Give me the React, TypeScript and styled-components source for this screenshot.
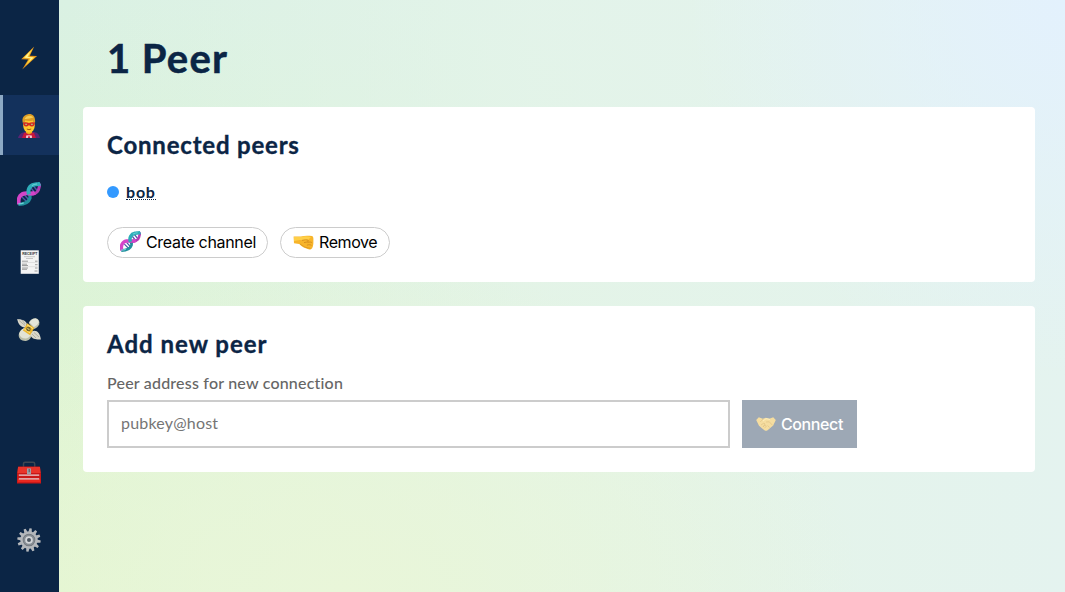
import React from 'react';
import styled, { createGlobalStyle } from 'styled-components';

const GlobalStyle = createGlobalStyle`
  * { box-sizing: border-box; }
  body { margin: 0; font-family: Lato, 'Liberation Sans', sans-serif; color: #0b2545; }
`;

const Page = styled.div`
  display: flex;
  height: 592px;
  overflow: hidden;
  background:
    radial-gradient(circle at 100% 0, #e3f1fd 0, rgba(227, 241, 253, 0) 380px),
    radial-gradient(ellipse 520px 330px at 32% 100%, #e9f6d9 0, rgba(233, 246, 217, 0) 100%),
    linear-gradient(90deg, rgba(229, 244, 235, 0) 6%, rgba(229, 244, 235, 0.8) 50%, #e4f3ef 100%),
    linear-gradient(180deg, #daf1e3 0, #dbf3d9 35%, #e2f6ce 100%);
`;

const Sidebar = styled.nav`
  display: flex;
  flex-direction: column;
  justify-content: space-between;
  width: 59px;
  flex: none;
  padding: 27px 0 23px;
  background: #0b2545;
`;

const NavGroup = styled.div`
  display: flex;
  flex-direction: column;
  gap: 8px;
`;

const NavItem = styled.a<{ $active?: boolean }>`
  display: flex;
  height: 60px;
  padding: 19px 0 0 14px;
  border-left: 3px solid ${p => (p.$active ? '#8da9c4' : 'transparent')};
  background: ${p => (p.$active ? '#13315c' : 'transparent')};
`;

const Icon = styled.svg<{ $size: number }>`
  display: block;
  flex: none;
  width: ${p => p.$size}px;
  height: ${p => p.$size}px;
`;

const Main = styled.main`
  display: flex;
  flex-direction: column;
  flex: 1;
  padding: 34px 30px 0 24px;
`;

const Title = styled.h1`
  margin: 0 0 25px 24px;
  font-size: 40px;
  line-height: 48px;
  font-weight: 700;
  letter-spacing: 1.2px;
  word-spacing: -0.5px;
  -webkit-text-stroke: 0.5px #0b2545;
`;

const Card = styled.section<{ $height: number }>`
  height: ${p => p.$height}px;
  margin-bottom: 24px;
  padding: 22px 24px 0;
  background: #fff;
  border-radius: 4px;
`;

const Heading = styled.h2<{ $spacing: number }>`
  margin: 0;
  font-size: 24px;
  line-height: 31px;
  padding-bottom: 1px;
  font-weight: 700;
  letter-spacing: ${p => p.$spacing}px;
  -webkit-text-stroke: 0.35px #0b2545;
`;

const Peer = styled.div`
  display: flex;
  align-items: center;
  gap: 7px;
  height: 20px;
  margin-top: 21px;
`;

const Status = styled.span`
  width: 12px;
  height: 12px;
  margin-bottom: 1px;
  border-radius: 50%;
  background: #3399ff;
`;

const Alias = styled.abbr`
  height: 18px;
  margin-bottom: 2px;
  font-size: 16px;
  line-height: 19px;
  font-weight: 700;
  letter-spacing: 0.8px;
  text-decoration: none;
  border-bottom: 1px dotted #0b2545;
`;

const Actions = styled.div`
  display: flex;
  gap: 12px;
  margin-top: 25px;
`;

const PillButton = styled.button<{ $width: number; $spacing: number }>`
  display: flex;
  align-items: center;
  gap: 5px;
  width: ${p => p.$width}px;
  height: 31px;
  padding: 0 0 2px 12px;
  border: 1px solid #ccc;
  border-radius: 16px;
  background: #fff;
  color: #000;
  font: 400 16px Inter, sans-serif;
  letter-spacing: ${p => p.$spacing}px;
  white-space: nowrap;
`;

const Label = styled.label`
  display: block;
  margin-top: 13px;
  font-size: 16px;
  line-height: 20px;
  font-weight: 500;
  letter-spacing: 0.2px;
  color: #666;
`;

const Form = styled.form`
  display: flex;
  gap: 12px;
  margin-top: 7px;
`;

const AddressInput = styled.input`
  width: 623px;
  height: 48px;
  padding: 0 12px 3px;
  border: 2px solid #ccc;
  background: #fff;
  font: 400 16px Lato, sans-serif;
  letter-spacing: 0.2px;
  &::placeholder { color: #757575; }
`;

const ConnectButton = styled.button`
  display: flex;
  align-items: center;
  gap: 5px;
  width: 115px;
  height: 48px;
  padding: 0 0 0 14px;
  border: 0;
  background: #9da8b5;
  color: #fff;
  font: 500 16px Inter, sans-serif;
  letter-spacing: -0.4px;
`;

const Bolt = () => (
  <Icon $size={24} viewBox="0 0 24 24">
    <path d="M17.2.4 4.2 13.2l7 .4-6 10 14.9-13.5-7.3-.3z" fill="#e5941a" />
    <path d="M15.8 2.4 6.2 12l6.7.6-4.7 7.1 9.6-8.5-6.5-.4z" fill="#ffd83c" />
    <path d="m13 5.5-5.3 6 6.1.7-1.5 3.1 4-3.7-6-.6z" fill="#fff6a0" />
  </Icon>
);

const Hero = () => (
  <Icon $size={24} viewBox="0 0 24 24">
    <path d="M1 24c1-4 4-6 8-6h7c4 0 6 2 7 6z" fill="#592474" />
    <path d="m5 24 2-5 5-1 5 1 2 5z" fill="#c8173b" />
    <path d="M9 16h6v3l-3 1.5L9 19z" fill="#e8a61c" />
    <path d="M9.3 21.5h5.4V24H9.3z" fill="#fff" />
    <path d="M10.7 22.2h2.6V24h-2.6z" fill="#d92344" />
    <ellipse cx="12" cy="11.5" rx="5.8" ry="7.3" fill="#ffc82c" />
    <path d="M6 9.5C4.2 4 7 1 11 .2c5-.8 8 3 6.9 9.3L16 6.5c-3 1-6 .6-8 .1z" fill="#dd9c24" />
    <path d="M7.5 5C9 1 15 .5 16.5 4c-2-1-4 1.5-9 1z" fill="#f8cb50" />
    <path d="M6.1 8.6c2-.7 4-.6 5.9.3 1.9-.9 3.9-1 5.9-.3-.1 3-1.3 4.2-3.4 4-1.2-.1-2-.7-2.5-1.5-.5.8-1.3 1.4-2.5 1.5-2.1.2-3.3-1-3.4-4z" fill="#d32b24" />
    <path d="M8.2 10.4H10m4 0h1.8" stroke="#b5b274" strokeWidth="1.3" />
    <path d="M9.8 15q2.2 1.4 4.4 0" stroke="#a65a13" fill="none" />
  </Icon>
);

const Dna = ({ size }: { size: number }) => (
  <Icon $size={size} viewBox="0 0 24 24">
    <path d="m5 15 5 5M7.5 13l4.5 5M14 6l4 5M16.5 4l4 5" stroke="#4c58ab" strokeWidth="1.4" />
    <path d="M11.8 11.8C16 13 21 11 21.8 6.8 22.3 4 23 3 23.3 1.5" fill="none" stroke="#b63eb5" strokeWidth="3" />
    <path d="M1.5 22.3c5 0 10.1-1.4 11.5-6.2.5-2-.1-3.4-1-4.9" fill="none" stroke="#218f9c" strokeWidth="3.4" />
    <path d="M1.8 22.3C.9 17 2.5 12.4 7.4 11.5c3.9-.6 7.8.8 10.5-.8" fill="none" stroke="#d444c8" strokeWidth="4" />
    <path d="M12 12.4c-1.7-4.6.6-9 5.1-9.8 2.4-.4 4.3-.2 6.2-1" fill="none" stroke="#2fadb9" strokeWidth="4" />
    <path d="M1.2 21.8c2 .1 3.9-.2 5.5-.9M15 3.6q2-1.6 5-1.6" fill="none" stroke="#6bd6d6" strokeWidth="1.2" />
  </Icon>
);

const Receipt = () => (
  <Icon $size={24} viewBox="0 0 24 24">
    <path d="M3.7.3h18.1v23.5H3.7z" fill="#f4f4f4" />
    <text x="12.8" y="5.4" textAnchor="middle" fontFamily="Liberation Sans" fontWeight="700" fontSize="3.5" fill="#333">RECEIPT</text>
    <path d="M7 6.7h11M9 8.5h7" stroke="#bbb" strokeWidth=".8" />
    <path d="M5 11.2h6M5 14.2h5M5 15.5h6M5 18h6M5 19.3h5M18 11.2h2.5M18 14.7h2.5M18 18h2.5M17.5 21h3" stroke="#888" strokeWidth=".8" />
    <path d="M5 12.5h15.5M5 16.7h15.5" stroke="#ccc" strokeWidth=".5" />
  </Icon>
);

const Money = () => (
  <Icon $size={24} viewBox="0 0 24 24">
    <path d="M1.7 17.5C2 13 5 10.5 8.5 10l6.2 5.5c0 4-1.7 6.5-5.7 7.4-4.5.3-7-2-7.3-5.4z" fill="#b9bda9" />
    <path d="M2.2 16C3 12.5 5.5 10.4 8.5 9.5l5.8 5.2c-.3 3.3-2.3 5-5.3 5.8-3.8 0-5.8-1.5-6.8-4.5z" fill="#e2e3d5" />
    <path d="M11.7 5c1.3-3 4-4.8 7-4.7 3 .7 4.3 3 3.5 6-1 2.5-2.7 4-5.2 4.8z" fill="#bdc0ad" />
    <path d="M12.3 4.2C14 1.7 16 .4 18.6.4c2 .4 3.2 2 3 4-1 2.2-2.6 3.8-4.8 4.6z" fill="#e3e5d9" />
    <path d="M9 9.5C4 9.5 1 6 .2.9c4 .3 7.8 1 9.6 4.4zM14.5 13.5c4.5-2.2 8.5.5 9.4 7.9-5 .2-8.5-.4-10.5-4z" fill="#d9d7ca" />
    <path d="m2 2.5 6 5M5 2l3 4m9 8.5 5 4.5m-7-3 4 4" stroke="#a8a797" strokeWidth=".8" />
    <path d="m10.2 5.2 7.2 4.6-4.3 7.4-7.2-4.7z" fill="#edb72f" />
    <path d="m9.9 6.7 6.3 4M7.3 11l5.6 3.8" stroke="#fee583" />
    <circle cx="11.5" cy="11" r="2.3" fill="#75672f" />
    <path d="m10.4 10 2 2" stroke="#f4dc70" />
  </Icon>
);

const Toolbox = () => (
  <Icon $size={24} viewBox="0 0 24 24">
    <path d="M6.5 7V3.8q0-1.6 1.6-1.6h8q1.6 0 1.6 1.6V7" fill="none" stroke="#3e4651" strokeWidth="1.5" />
    <path d="M1.2 6.5h21.6L24 14v9.5H0V14z" fill="#c91717" />
    <path d="M1 7h22l.5 6H.5z" fill="#e9332a" />
    <path d="M.8 19h22.4v3.2H.8z" fill="#e9281f" />
    <path d="M1.8 15.2h20.4M1.8 18.9h20.4" stroke="#e8d1d5" strokeWidth="1.2" />
    <path d="M10 8.4h4v6h-4z" fill="#9d9fa8" />
    <path d="M12.2 9v3.2" stroke="#555" />
  </Icon>
);

const Gear = () => (
  <Icon $size={24} viewBox="0 0 24 24">
    {Array.from({ length: 12 }, (_, i) => (
      <path key={i} d="m10.3 4 .6-3.7h2.2l.6 3.7z" fill="#b4b7bb" transform={`rotate(${i * 30 + 8} 12 12)`} />
    ))}
    <circle cx="12" cy="12" r="7.5" fill="#6f757c" stroke="#b4b7bb" strokeWidth="2.4" />
    <circle cx="12" cy="12" r="5.6" fill="#878d93" />
    <circle cx="12" cy="12" r="2.9" fill="#4c5660" stroke="#d5d7da" strokeWidth="1.8" />
  </Icon>
);

const Fist = () => (
  <Icon $size={21} viewBox="0 0 21 21">
    <path d="M.6 5.4 8 5.6c3-1.1 7-1.2 11-.5 1.3.4 1.6 2 1.4 4.3.2 4.7-.6 7.9-2.4 8.8-1.6.6-3.4.2-5.3-.9-2.6-1-4.8-2.2-6.5-4.2L1 12.3z" fill="#f7b42a" />
    <path d="M1 6h7c3-1 6-1 10 0l-3 3H7l-6 1z" fill="#ffcf47" />
    <path d="M9 9.4q4-1.2 6-.4 1.2 1.5-1 2l-3 .6M14.5 11.6c2-.8 3.6-.8 4.6.2m-5.2 2.4c2-.8 3.8-.5 4.6.2" fill="none" stroke="#cf861b" strokeWidth=".8" />
    <path d="M7 13q5 4.2 10.5 4.4" fill="none" stroke="#dc9620" strokeWidth=".8" />
  </Icon>
);

const Handshake = () => (
  <Icon $size={20} viewBox="0 0 20 20">
    <path d="m.2 6 2.6-2.7 4 1.4 3-1 3.6 1 3.8-1.4L19.8 6l-2.6 5.5-5.6 4.8c-1 .7-2 .7-3.2 0L3 11.7z" fill="#f5dda0" />
    <path d="m5 11 3-2 1 1-2 3m0 0 2-2 1.4 1-1.8 2.2M7 5 4.2 8M10 8l3.3-.2 3.2 3.5m-5 .2 2.2 2" fill="none" stroke="#dfc385" strokeWidth=".7" />
    <path d="m7 7 3-2.3 4 .7" stroke="#fff0bd" fill="none" />
  </Icon>
);

export default function App() {
  return (
    <Page>
      <GlobalStyle />
      <Sidebar>
        <NavGroup>
          <NavItem><Bolt /></NavItem>
          <NavItem $active><Hero /></NavItem>
          <NavItem><Dna size={24} /></NavItem>
          <NavItem><Receipt /></NavItem>
          <NavItem><Money /></NavItem>
        </NavGroup>
        <NavGroup>
          <NavItem><Toolbox /></NavItem>
          <NavItem><Gear /></NavItem>
        </NavGroup>
      </Sidebar>
      <Main>
        <Title>1 Peer</Title>
        <Card $height={175}>
          <Heading $spacing={0.8}>Connected peers</Heading>
          <Peer>
            <Status />
            <Alias>bob</Alias>
          </Peer>
          <Actions>
            <PillButton $width={161} $spacing={-0.32}><Dna size={21} />Create channel</PillButton>
            <PillButton $width={110} $spacing={-0.42}><Fist />Remove</PillButton>
          </Actions>
        </Card>
        <Card $height={166}>
          <Heading $spacing={1}>Add new peer</Heading>
          <Label htmlFor="address">Peer address for new connection</Label>
          <Form>
            <AddressInput id="address" placeholder="pubkey@host" />
            <ConnectButton type="button"><Handshake />Connect</ConnectButton>
          </Form>
        </Card>
      </Main>
    </Page>
  );
}
